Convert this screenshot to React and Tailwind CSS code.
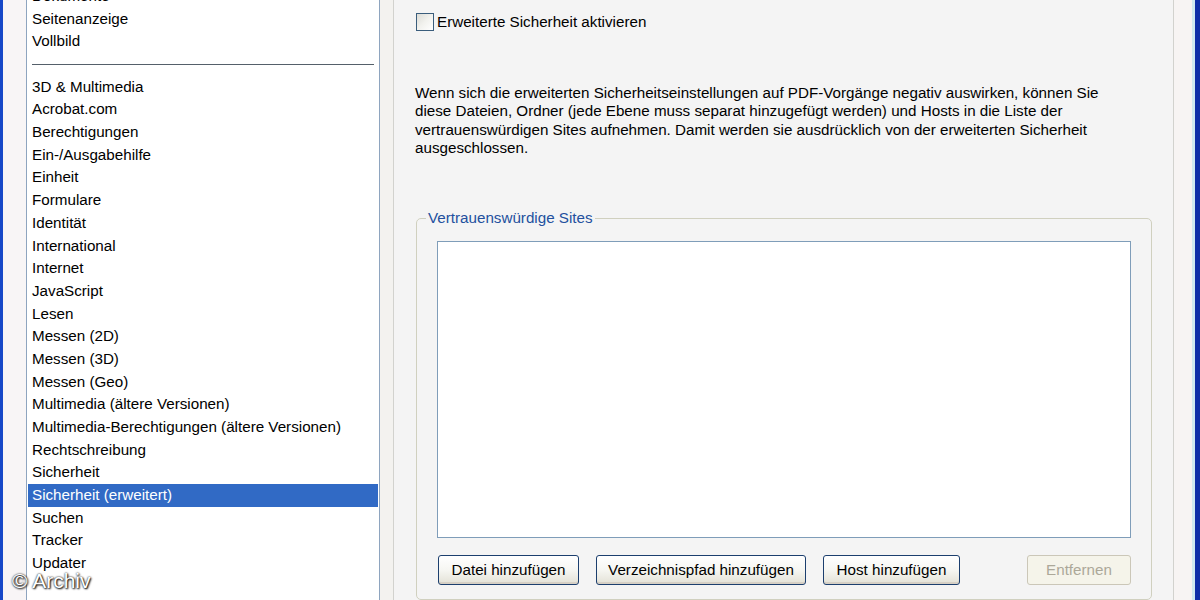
import React from 'react';

const topItems = ['Dokumente', 'Seitenanzeige', 'Vollbild'];
const items = [
    '3D & Multimedia',
    'Acrobat.com',
    'Berechtigungen',
    'Ein-/Ausgabehilfe',
    'Einheit',
    'Formulare',
    'Identität',
    'International',
    'Internet',
    'JavaScript',
    'Lesen',
    'Messen (2D)',
    'Messen (3D)',
    'Messen (Geo)',
    'Multimedia (ältere Versionen)',
    'Multimedia-Berechtigungen (ältere Versionen)',
    'Rechtschreibung',
    'Sicherheit',
    'Sicherheit (erweitert)',
    'Suchen',
    'Tracker',
    'Updater',
];

function Row({ label, selected }) {
    return (
        <div className={`h-[22.7px] shrink-0 mx-px pl-1 flex items-center whitespace-nowrap ${selected ? 'bg-[#316ac5] text-white' : 'text-black'}`}>
            {label}
        </div>
    );
}

function XpButton({ children, width, disabled }) {
    return (
        <button
            type="button"
            disabled={disabled}
            className={`h-[30px] ${width} rounded-[3px] border text-[15.2px] flex items-center justify-center ${disabled
                ? 'border-[#cbc7b8] bg-[#f5f4ea] text-[#aca899]'
                : 'border-[#1c3f6e] bg-gradient-to-b from-white via-[#f6f6f2] to-[#e3e1d6] text-black shadow-[inset_0_-2px_0_#d6d0c5]'}`}
        >
            {children}
        </button>
    );
}

export default function App() {
    return (
        <div className="relative w-[1200px] h-[600px] overflow-hidden flex bg-[#f5f4f2] font-['Liberation_Sans',Arial,sans-serif]">
            {/* window frame left */}
            <div className="w-[3px] bg-[#1848c8]" />
            <div className="w-[23px] bg-[#f8f5f6]" />

            {/* category list, scrolled a little */}
            <div className="w-[354px] h-full bg-white border-x border-[#8ea4bf] overflow-hidden">
                <div className="-mt-[15px] flex flex-col text-[15.2px]">
                    {topItems.map(t => <Row key={t} label={t} />)}
                    <div className="h-[22.7px] shrink-0 flex items-center px-[5px]">
                        <div className="w-full h-px bg-[#55606a]" />
                    </div>
                    {items.map(t => <Row key={t} label={t} selected={t === 'Sicherheit (erweitert)'} />)}
                </div>
            </div>

            <div className="w-[13px] bg-[#f3f2ef]" />

            {/* settings panel */}
            <div className="w-[781px] h-full bg-[#f4f4f4] border-x border-[#d2d2ce] pl-[22px] pr-[20px]">
                <label className="mt-[11px] flex items-center gap-[3px] text-[15.2px] text-black">
                    <span className="w-[18px] h-[18px] border border-[#3a5d7c] bg-gradient-to-br from-[#dcdcd6] via-[#f2f2ee] to-white" />
                    Erweiterte Sicherheit aktivieren
                </label>

                <p className="mt-[50px] -ml-px text-[15.2px] leading-[18.4px] text-black whitespace-nowrap">
                    Wenn sich die erweiterten Sicherheitseinstellungen auf PDF-Vorgänge negativ auswirken, können Sie<br />
                    diese Dateien, Ordner (jede Ebene muss separat hinzugefügt werden) und Hosts in die Liste der<br />
                    vertrauenswürdigen Sites aufnehmen. Damit werden sie ausdrücklich von der erweiterten Sicherheit<br />
                    ausgeschlossen.
                </p>

                <fieldset className="mt-[52px] w-[736px] h-[391px] border border-[#d0d0bf] rounded-[5px] flex flex-col">
                    <legend className="ml-[9px] px-[2px] text-[15.2px] leading-[18px] text-[#23509e]">
                        Vertrauenswürdige Sites
                    </legend>
                    <div className="px-[20px] pb-[12px] flex flex-col">
                        <div className="mt-[14px] h-[297px] bg-white border border-[#7f9db9]" />
                        <div className="mt-[17px] flex items-center gap-[17px] pl-px">
                            <XpButton width="w-[141px]">Datei hinzufügen</XpButton>
                            <XpButton width="w-[210px]">Verzeichnispfad hinzufügen</XpButton>
                            <XpButton width="w-[137px]">Host hinzufügen</XpButton>
                            <div className="ml-auto">
                                <XpButton width="w-[104px]" disabled>Entfernen</XpButton>
                            </div>
                        </div>
                    </div>
                </fieldset>
            </div>

            <div className="w-[18px] bg-[#f7f4f3]" />
            <div className="w-[3px] bg-[#cfeaf0]" />
            <div className="flex-1 bg-[#0d2fa8]" />

            {/* watermark */}
            <div className="absolute left-[12px] top-[565px] text-[21px] text-white [text-shadow:0_0_2px_#000,1px_1px_2px_#000]">
                © Archiv
            </div>
        </div>
    );
}
